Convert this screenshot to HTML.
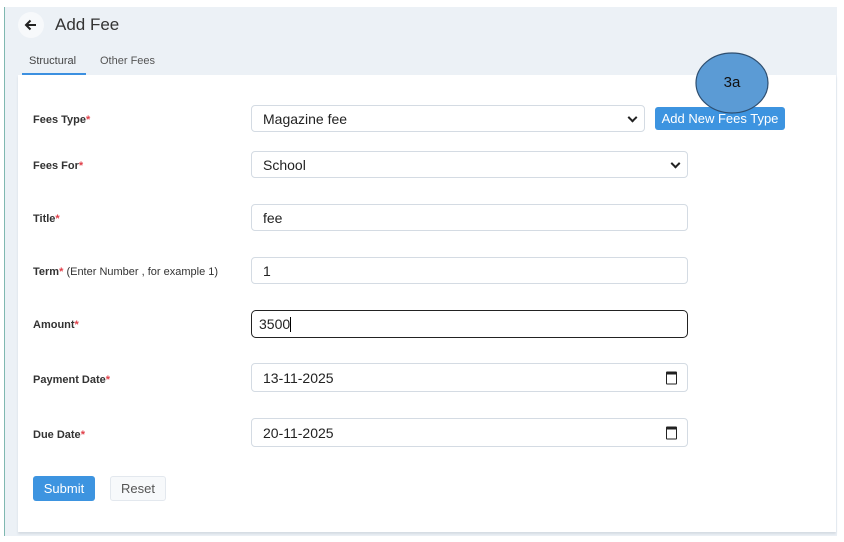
<!DOCTYPE html><html><head><style>
body{margin:0;width:844px;height:542px;background:#fff;font-family:"Liberation Sans",sans-serif;position:relative;overflow:hidden}
.a{position:absolute}
.panel{left:4px;top:7px;width:832px;height:529px;background:#ecf1f6;border-left:1px solid #7fb8b0}
.card{left:18px;top:75px;width:818px;height:457px;background:#fff;box-shadow:0 2px 2px #d5dbe2}
.lbl{left:33px;font-size:11px;font-weight:bold;color:#333;transform:translateY(-40%)}
.lbl i{color:#e0404a;font-style:normal}
.inp{left:251px;width:435px;border:1px solid #d4dbe3;border-radius:4px;background:#fff;font-size:14px;color:#222;box-sizing:border-box;padding-left:11px;display:flex;align-items:center}
.chev{position:absolute;right:8px;top:50%;width:5px;height:5px;border-right:2px solid #222;border-bottom:2px solid #222;transform:translateY(-70%) rotate(45deg)}
.cal{position:absolute;right:10px;top:50%;transform:translateY(-50%);width:9px;height:9px;border:1.5px solid #222;border-top-width:3px;border-radius:1px}
</style></head><body>
<div class="a panel"></div>
<div class="a" style="left:18px;top:12px;width:26px;height:26px;border-radius:50%;background:#f7f9fb"></div>
<svg class="a" style="left:24px;top:18px" width="14" height="14"><path d="M12 7H2M6.5 2.5L2 7l4.5 4.5" fill="none" stroke="#222" stroke-width="2"/></svg>
<div class="a" style="left:55px;top:15px;font-size:17px;color:#333">Add Fee</div>
<div class="a" style="left:29px;top:55px;font-size:11px;color:#444">Structural</div>
<div class="a" style="left:22px;top:73px;width:64px;height:2px;background:#3b8fe0"></div>
<div class="a" style="left:100px;top:55px;font-size:11px;color:#555">Other Fees</div>
<div class="a card"></div>
<div class="a lbl" style="top:119px">Fees Type<i>*</i></div>
<div class="a lbl" style="top:165px">Fees For<i>*</i></div>
<div class="a lbl" style="top:218px">Title<i>*</i></div>
<div class="a lbl" style="top:271px">Term<i>*</i> <span style="font-weight:normal">(Enter Number , for example 1)</span></div>
<div class="a lbl" style="top:324px">Amount<i>*</i></div>
<div class="a lbl" style="top:379px">Payment Date<i>*</i></div>
<div class="a lbl" style="top:434px">Due Date<i>*</i></div>
<div class="a inp" style="top:105px;width:394px;height:27px">Magazine fee<span class="chev"></span></div>
<div class="a inp" style="top:151px;width:437px;height:27px">School<span class="chev"></span></div>
<div class="a inp" style="top:204px;width:437px;height:27px">fee</div>
<div class="a inp" style="top:257px;width:437px;height:27px">1</div>
<div class="a inp" style="top:310px;width:437px;height:28px;border:1.5px solid #222;border-radius:5px;padding-left:7px">3500<span style="display:inline-block;width:1px;height:15px;background:#000"></span></div>
<div class="a inp" style="top:363px;width:437px;height:29px">13-11-2025<span class="cal"></span></div>
<div class="a inp" style="top:418px;width:437px;height:29px">20-11-2025<span class="cal"></span></div>
<div class="a" style="left:655px;top:107px;width:130px;height:23px;background:#3d94e0;border-radius:3px;color:#fff;font-size:13px;line-height:23px;text-align:center">Add New Fees Type</div>
<svg class="a" style="left:694px;top:51px" width="78" height="64"><ellipse cx="38" cy="32" rx="36" ry="30" fill="#5b9bd5" stroke="#2f4f70" stroke-width="1.2"/><text x="38" y="36" font-size="15" text-anchor="middle" fill="#111" font-family="Liberation Sans">3a</text></svg>
<div class="a" style="left:33px;top:476px;width:62px;height:25px;background:#3d94e0;border-radius:3px;color:#fff;font-size:13px;line-height:25px;text-align:center">Submit</div>
<div class="a" style="left:110px;top:476px;width:56px;height:25px;background:#f7f9fb;border:1px solid #e3e8ee;box-sizing:border-box;border-radius:3px;color:#555;font-size:13px;line-height:23px;text-align:center">Reset</div>
</body></html>
